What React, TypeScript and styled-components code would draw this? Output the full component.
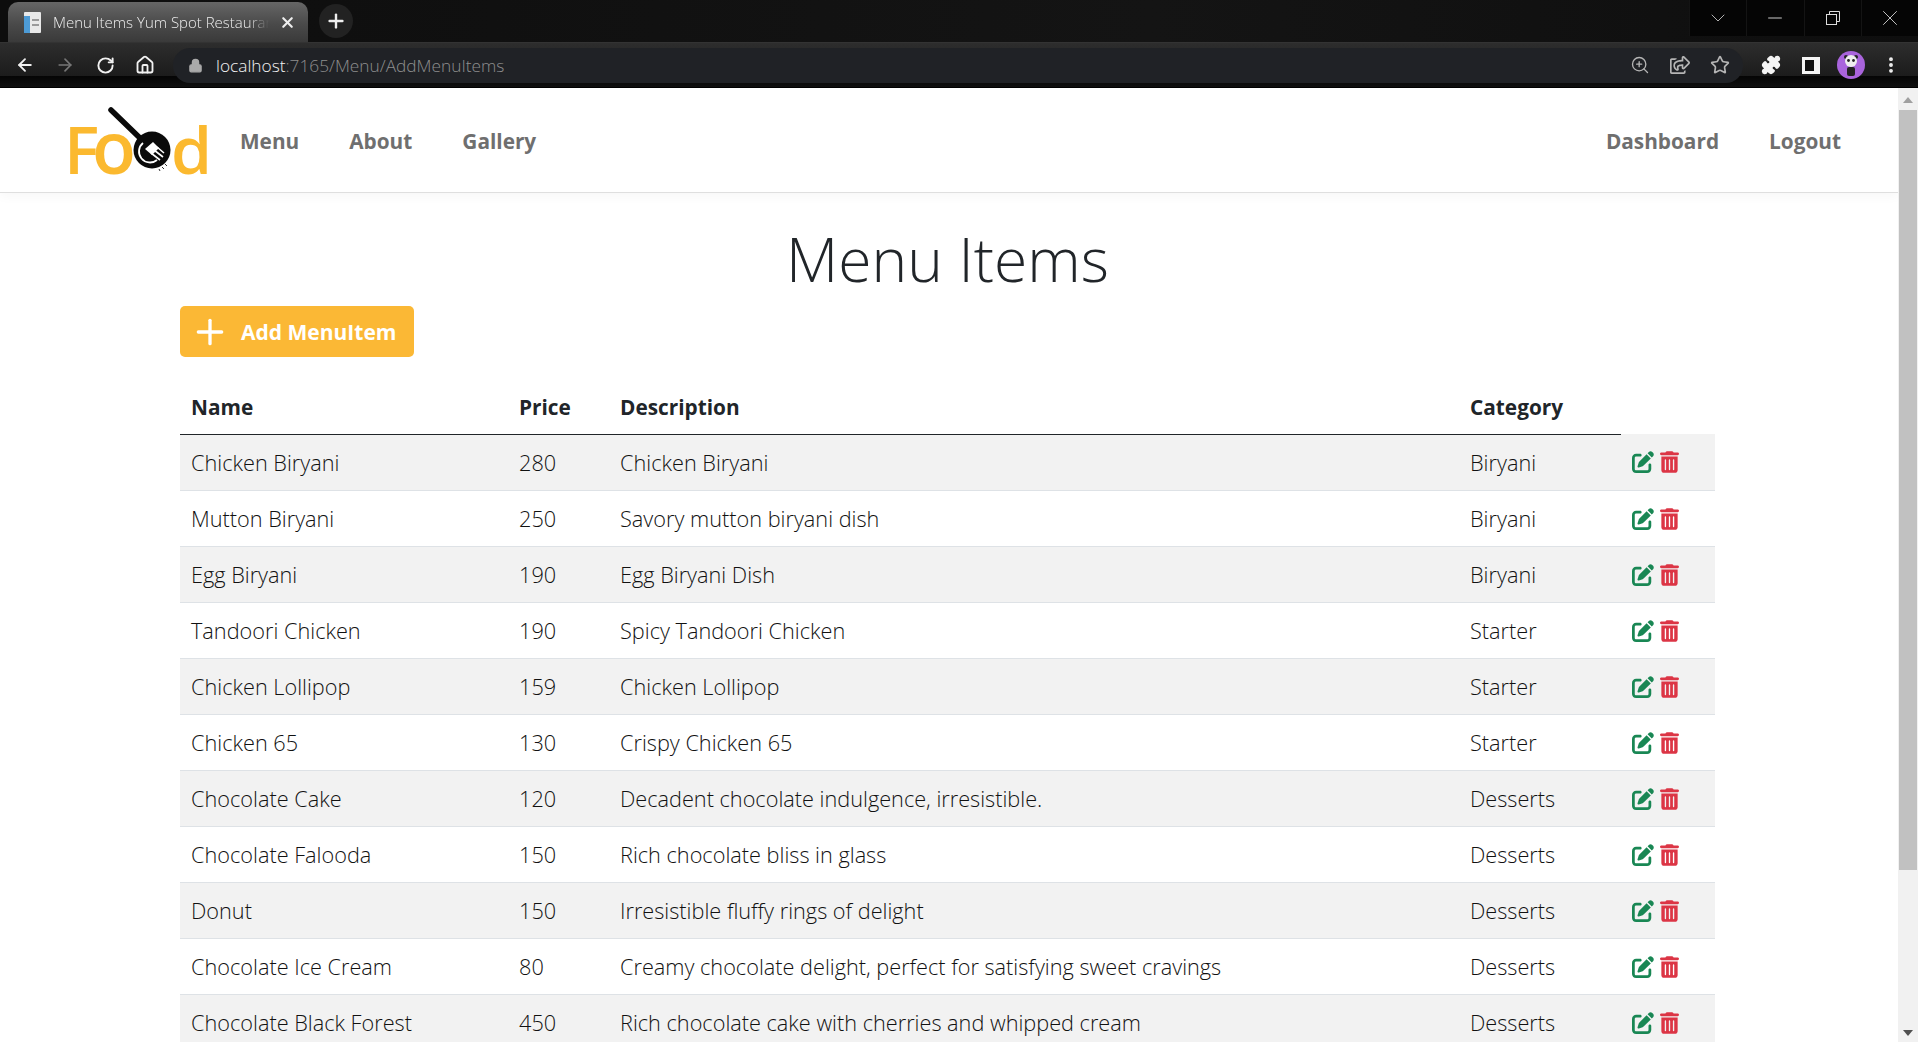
import React from 'react';
import styled, { createGlobalStyle } from 'styled-components';
import { ArrowLeft, ArrowRight, RotateCw, Home, Lock, ZoomIn, Star, MoreVertical, ChevronDown, Minus, X, Plus, Puzzle } from 'lucide-react';
import { FaRegShareSquare } from 'react-icons/fa';
import { FaPenToSquare, FaTrashCan } from 'react-icons/fa6';

const GlobalStyle = createGlobalStyle`
  html, body {
    margin: 0;
    padding: 0;
    height: 100%;
    overflow: hidden;
    background: #fff;
  }
  * { box-sizing: border-box; }
`;

const Screen = styled.div`
  width: 1918px;
  height: 1042px;
  display: flex;
  flex-direction: column;
  overflow: hidden;
  font-family: 'Open Sans', 'Liberation Sans', sans-serif;
`;

/* browser chrome */
const TabStrip = styled.div`
  height: 42px;
  flex: none;
  display: flex;
  justify-content: space-between;
  background: linear-gradient(90deg, #0d0d0d, #141414 60%, #0e0e0e);
  padding-top: 2px;
`;

const TabGroup = styled.div`
  display: flex;
  align-items: center;
  padding-left: 8px;
  gap: 11px;
`;

const Tab = styled.div`
  width: 300px;
  height: 40px;
  display: flex;
  align-items: center;
  gap: 10px;
  padding: 0 12px 0 14px;
  border-radius: 10px 10px 0 0;
  background: linear-gradient(180deg, #666 0%, #4a4a4a 55%, #3a3a3a 100%);
  color: #eee;
`;

const Favicon = styled.svg`
  flex: none;
  width: 21px;
  height: 21px;
`;

const TabTitle = styled.span`
  flex: 1;
  font-size: 15px;
  font-weight: 300;
  white-space: nowrap;
  overflow: hidden;
  -webkit-mask-image: linear-gradient(90deg, #000 90%, transparent);
  mask-image: linear-gradient(90deg, #000 90%, transparent);
`;

const NewTab = styled.div`
  width: 34px;
  height: 34px;
  border-radius: 50%;
  background: #222;
  display: flex;
  align-items: center;
  justify-content: center;
  color: #eee;
  margin-top: -2px;
`;

const WindowControls = styled.div`
  display: flex;
  height: 36px;
  margin-top: -2px;
  background: #050505;
`;

const WindowButton = styled.div`
  width: 57.25px;
  display: flex;
  align-items: center;
  justify-content: center;
  color: #ddd;
  border-left: 1px solid #141414;
`;

const RestoreIcon = styled.svg`
  width: 14px;
  height: 14px;
  fill: none;
  stroke: #ddd;
`;

const Toolbar = styled.div`
  height: 46px;
  flex: none;
  display: flex;
  align-items: center;
  padding-left: 15px;
  background: linear-gradient(180deg, #2d2d2d 0%, #1c1c1c 74%, #050505 76%, #0f0f0f 100%);
  border-bottom: 1px solid #000;
  border-top: 1px solid #333;
`;

const NavIcons = styled.div`
  display: flex;
  align-items: center;
  gap: 20px;
  width: 158px;
  flex: none;
`;

const NavIcon = styled.span<{ $dim?: boolean }>`
  display: flex;
  width: 20px;
  justify-content: center;
  color: ${p => (p.$dim ? '#777' : '#f1f1f1')};
`;

const Omnibox = styled.div`
  width: 1570px;
  height: 35px;
  flex: none;
  border-radius: 17px;
  background: #202226;
  display: flex;
  align-items: center;
  padding: 0 13px 0 15px;
`;

const Url = styled.div`
  flex: 1;
  margin-left: 13px;
  font-size: 17.3px;
  font-weight: 300;
  color: #8e8e8e;
  span {
    color: #f2f2f2;
  }
`;

const OmniIcons = styled.div`
  display: flex;
  align-items: center;
  gap: 20px;
  color: #b5b5b5;
`;

const ExtensionIcons = styled.div`
  flex: none;
  display: grid;
  grid-template-columns: repeat(4, 40px);
  justify-items: center;
  align-items: center;
  padding-left: 8px;
  color: #f4f4f4;
`;

const SidePanelIcon = styled.div`
  width: 18px;
  height: 17px;
  border: 3px solid #f4f4f4;
  border-right-width: 6px;
  background: #111;
`;

const Avatar = styled.div`
  width: 28px;
  height: 28px;
  border-radius: 50%;
  background: #a964dc;
  display: flex;
  align-items: center;
  justify-content: center;
`;

/* page */
const Viewport = styled.div`
  flex: 1;
  min-height: 0;
  display: flex;
`;

const Page = styled.div`
  flex: 1;
  min-width: 0;
  overflow: hidden;
`;

const Scrollbar = styled.div`
  width: 20px;
  flex: none;
  display: flex;
  flex-direction: column;
  align-items: center;
  background: #f1f1f1;
  padding-top: 9px;
`;

const ScrollArrow = styled.div`
  width: 0;
  height: 0;
  border-left: 5px solid transparent;
  border-right: 5px solid transparent;
  border-bottom: 6px solid #a0a0a0;
`;

const ScrollThumb = styled.div`
  width: 18px;
  height: 760px;
  margin-top: 7px;
  background: #c1c1c1;
`;

const ScrollDownArrow = styled(ScrollArrow)`
  margin-top: auto;
  margin-bottom: 6px;
  border-bottom: 0;
  border-top: 6px solid #505050;
`;

const NavBar = styled.nav`
  height: 105px;
  display: flex;
  align-items: center;
  padding: 0 57px 0 63px;
  border-bottom: 1px solid #dfdfdf;
  box-shadow: 0 4px 10px rgba(0, 0, 0, 0.03);
`;

const Logo = styled.svg`
  width: 152px;
  height: 104px;
  flex: none;
`;

const NavLinks = styled.div<{ $right?: boolean }>`
  display: flex;
  gap: 50px;
  padding-top: 1px;
  margin-left: ${p => (p.$right ? 'auto' : '25px')};
`;

const NavLink = styled.a`
  font-size: 20.8px;
  font-weight: 700;
  color: #6f6f6f;
`;

const Content = styled.main`
  padding: 0 183px 0 180px;
`;

const Title = styled.h1`
  margin: 28px 0 0;
  text-align: center;
  font-size: 60.5px;
  line-height: 76px;
  font-weight: 300;
  color: #212529;
`;

const AddButton = styled.button`
  display: flex;
  align-items: center;
  gap: 12px;
  width: 234px;
  height: 51px;
  margin-top: 9px;
  padding: 0 11px;
  border: none;
  border-radius: 5px;
  background: #fbb835;
  color: #fff;
  font-family: inherit;
  font-size: 21px;
  font-weight: 700;
  svg {
    margin: 0 -1px;
  }
`;

const Table = styled.table`
  width: 100%;
  margin-top: 21px;
  border-collapse: collapse;
  table-layout: fixed;
  color: #212529;
`;

const HeadCell = styled.th<{ $width: number }>`
  width: ${p => p.$width}px;
  height: 56px;
  padding: 2px 11px 0;
  text-align: left;
  font-size: 20.8px;
  font-weight: 700;
  border-bottom: 1px solid #212529;
`;

const ActionHead = styled.th`
  border: none;
`;

const Row = styled.tr`
  height: 56px;
  border-bottom: 1px solid #dee2e6;
  &:nth-child(odd) {
    background: #f2f2f2;
  }
`;

const Cell = styled.td`
  padding: 0 11px;
  font-size: 21.7px;
  font-weight: 300;
  color: #111;
  white-space: nowrap;
`;

const Actions = styled.div`
  display: flex;
  align-items: center;
  gap: 6px;
  padding-top: 1px;
`;

const EditIcon = styled(FaPenToSquare)`
  width: 22px;
  height: 22px;
  color: #198754;
`;

const TrashIcon = styled(FaTrashCan)`
  width: 19px;
  height: 22px;
  color: #dc3545;
`;

const items = [
  ['Chicken Biryani', '280', 'Chicken Biryani', 'Biryani'],
  ['Mutton Biryani', '250', 'Savory mutton biryani dish', 'Biryani'],
  ['Egg Biryani', '190', 'Egg Biryani Dish', 'Biryani'],
  ['Tandoori Chicken', '190', 'Spicy Tandoori Chicken', 'Starter'],
  ['Chicken Lollipop', '159', 'Chicken Lollipop', 'Starter'],
  ['Chicken 65', '130', 'Crispy Chicken 65', 'Starter'],
  ['Chocolate Cake', '120', 'Decadent chocolate indulgence, irresistible.', 'Desserts'],
  ['Chocolate Falooda', '150', 'Rich chocolate bliss in glass', 'Desserts'],
  ['Donut', '150', 'Irresistible fluffy rings of delight', 'Desserts'],
  ['Chocolate Ice Cream', '80', 'Creamy chocolate delight, perfect for satisfying sweet cravings', 'Desserts'],
  ['Chocolate Black Forest', '450', 'Rich chocolate cake with cherries and whipped cream', 'Desserts'],
];

const App: React.FC = () => (
  <Screen>
    <GlobalStyle />
    <TabStrip>
      <TabGroup>
        <Tab>
          <Favicon viewBox="0 0 21 21">
            <rect x="2" y="0" width="17" height="21" rx="1" fill="#e8e8e8" />
            <rect x="2" y="4" width="6" height="17" fill="#4d9bd6" />
            <rect x="10" y="7" width="7" height="2" fill="#999" />
            <rect x="10" y="12" width="7" height="2" fill="#999" />
          </Favicon>
          <TabTitle>Menu Items Yum Spot Restaurant</TabTitle>
          <X size={17} strokeWidth={3} />
        </Tab>
        <NewTab>
          <Plus size={22} strokeWidth={2.6} />
        </NewTab>
      </TabGroup>
      <WindowControls>
        <WindowButton>
          <ChevronDown size={24} strokeWidth={0.8} />
        </WindowButton>
        <WindowButton>
          <Minus size={22} strokeWidth={1} />
        </WindowButton>
        <WindowButton>
          <RestoreIcon viewBox="0 0 14 14">
            <rect x="0.5" y="3.5" width="10" height="10" />
            <path d="M3.5 3.5V.5h10v10h-3" />
          </RestoreIcon>
        </WindowButton>
        <WindowButton>
          <X size={26} strokeWidth={0.8} />
        </WindowButton>
      </WindowControls>
    </TabStrip>
    <Toolbar>
      <NavIcons>
        <NavIcon>
          <ArrowLeft size={22} strokeWidth={2.2} />
        </NavIcon>
        <NavIcon $dim>
          <ArrowRight size={22} strokeWidth={2} />
        </NavIcon>
        <NavIcon>
          <RotateCw size={19} strokeWidth={2.4} />
        </NavIcon>
        <NavIcon>
          <Home size={20} strokeWidth={2.2} />
        </NavIcon>
      </NavIcons>
      <Omnibox>
        <Lock size={15} color="#aaa" fill="#aaa" />
        <Url>
          <span>localhost</span>:7165/Menu/AddMenuItems
        </Url>
        <OmniIcons>
          <ZoomIn size={20} strokeWidth={1.6} />
          <FaRegShareSquare size={20} />
          <Star size={20} strokeWidth={2} />
        </OmniIcons>
      </Omnibox>
      <ExtensionIcons>
        <Puzzle size={20} fill="#f4f4f4" />
        <SidePanelIcon />
        <Avatar>
          <svg width="20" height="24" viewBox="0 0 20 24">
            <circle cx="5" cy="4" r="2" fill="#222" />
            <circle cx="15" cy="4" r="2" fill="#222" />
            <circle cx="10" cy="8" r="6" fill="#eee" />
            <circle cx="7.5" cy="7.5" r="1.4" fill="#222" />
            <circle cx="12.5" cy="7.5" r="1.4" fill="#222" />
            <rect x="6" y="14" width="8" height="9" rx="2" fill="#222" />
          </svg>
        </Avatar>
        <MoreVertical size={20} strokeWidth={2.6} />
      </ExtensionIcons>
    </Toolbar>
    <Viewport>
      <Page>
        <NavBar>
          <Logo viewBox="-6 -17 152 104">
            <text y="69" fontFamily="'Open Sans', sans-serif" fontWeight="600" fontSize="66" fill="#fbb92f">
              <tspan x="-5">F</tspan>
              <tspan x="23" fontSize="72">o</tspan>
              <tspan x="102">d</tspan>
            </text>
            <line x1="42" y1="5" x2="72" y2="34" stroke="#0a0a0a" strokeWidth="5.5" strokeLinecap="round" />
            <circle cx="83" cy="45" r="18.5" fill="#0a0a0a" />
            <path d="M74 38a11 11 0 0 0 14 17" fill="none" stroke="#fff" strokeWidth="1.8" />
            <path d="M76 44l8-7 6 6-7 7z" fill="#fff" />
            <path d="M82 48l9 7M85 45l9 7M88 42l7 6" stroke="#fff" strokeWidth="1.6" />
            <path d="M93 62l2 2M96 59l2 2M90 64l1 2" stroke="#333" strokeWidth="1" />
          </Logo>
          <NavLinks>
            <NavLink>Menu</NavLink>
            <NavLink>About</NavLink>
            <NavLink>Gallery</NavLink>
          </NavLinks>
          <NavLinks $right>
            <NavLink>Dashboard</NavLink>
            <NavLink>Logout</NavLink>
          </NavLinks>
        </NavBar>
        <Content>
          <Title>Menu Items</Title>
          <AddButton>
            <Plus size={40} strokeWidth={2} />
            Add MenuItem
          </AddButton>
          <Table>
            <thead>
              <tr>
                <HeadCell $width={328}>Name</HeadCell>
                <HeadCell $width={101}>Price</HeadCell>
                <HeadCell $width={850}>Description</HeadCell>
                <HeadCell $width={162}>Category</HeadCell>
                <ActionHead />
              </tr>
            </thead>
            <tbody>
              {items.map(([name, price, description, category]) => (
                <Row key={name}>
                  <Cell>{name}</Cell>
                  <Cell>{price}</Cell>
                  <Cell>{description}</Cell>
                  <Cell>{category}</Cell>
                  <Cell>
                    <Actions>
                      <EditIcon />
                      <TrashIcon />
                    </Actions>
                  </Cell>
                </Row>
              ))}
            </tbody>
          </Table>
        </Content>
      </Page>
      <Scrollbar>
        <ScrollArrow />
        <ScrollThumb />
        <ScrollDownArrow />
      </Scrollbar>
    </Viewport>
  </Screen>
);

export default App;
